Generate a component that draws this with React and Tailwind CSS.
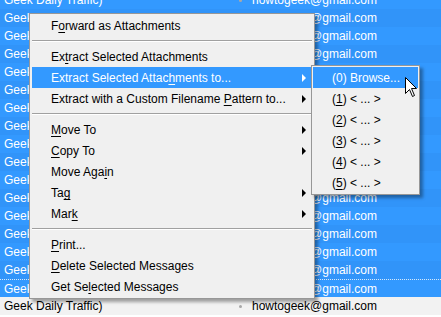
import React from "react";

const mainItems = [
  { label: "F&orward as Attachments" },
  { sep: true },
  { label: "Ex&tract Selected Attachments" },
  { label: "Extract Selected Attac&hments to...", sub: true, active: true },
  { label: "Extract with a Custom Filename &Pattern to...", sub: true },
  { sep: true },
  { label: "&Move To", sub: true },
  { label: "&Copy To", sub: true },
  { label: "Move Aga&in" },
  { label: "Ta&g", sub: true },
  { label: "Mar&k", sub: true },
  { sep: true },
  { label: "&Print..." },
  { label: "&Delete Selected Messages" },
  { label: "Get Se&lected Messages" },
];

const subItems = [
  { label: "(0) Browse...", active: true },
  { label: "(&1) < ... >" },
  { label: "(&2) < ... >" },
  { label: "(&3) < ... >" },
  { label: "(&4) < ... >" },
  { label: "(&5) < ... >" },
];

function Label({ text }) {
  const i = text.indexOf("&");
  if (i < 0) return <span className="whitespace-pre">{text}</span>;
  return (
    <span className="whitespace-pre">
      {text.slice(0, i)}
      <span className="underline underline-offset-[2px]">{text[i + 1]}</span>
      {text.slice(i + 2)}
    </span>
  );
}

function Separator() {
  return (
    <div className="h-[10px] py-[4px]">
      <div className="h-px bg-[#a0a0a0]" />
      <div className="h-px bg-white" />
    </div>
  );
}

function MenuItem({ item }) {
  return (
    <div
      className={
        "h-[21px] flex items-center justify-between pl-[19px] pr-[6px] pt-[1px] " +
        (item.active ? "bg-[#3399ff] text-white" : "text-black")
      }
    >
      <Label text={item.label} />
      {item.sub && (
        <div
          className={
            "w-0 h-0 border-y-[4px] border-y-transparent border-l-[4px] " +
            (item.active ? "border-l-white" : "border-l-black")
          }
        />
      )}
    </div>
  );
}

function Row({ index, selected, focus }) {
  let bg = index % 2 === 0 ? "bg-[#3399ff]" : "bg-[#3194f9]";
  if (!selected) bg = index % 2 === 0 ? "bg-white" : "bg-[#f2f2f2]";
  return (
    <div
      className={
        "h-[18px] flex items-center " +
        bg +
        (selected ? " text-white" : " text-black") +
        (focus ? " border-t border-dotted border-[#d8e8f8]" : "")
      }
    >
      <div className="w-[236px] pl-[4px] whitespace-nowrap">Geek Daily Traffic)</div>
      <div className="w-[16px] flex justify-start">
        <div className="ml-[3px] w-[3px] h-[3px] rounded-full bg-[#a8a8a8]" />
      </div>
      <div className="whitespace-nowrap">howtogeek@gmail.com</div>
    </div>
  );
}

export default function App() {
  const rows = Array.from({ length: 19 }, (_, i) => i);
  return (
    <div className="relative w-[441px] h-[317px] overflow-hidden bg-white font-['Liberation_Sans',Arial,sans-serif] text-[12px] leading-none">
      <div className="-mt-[9px]">
        {rows.map((i) => (
          <Row key={i} index={i} selected={i < 17} focus={i === 16} />
        ))}
      </div>

      <div className="absolute left-[29px] top-[13px] w-[286px] border border-[#979797] bg-[#f0f0f0] py-[1px] px-[2px] shadow-[3px_3px_3px_rgba(0,0,0,0.35)]">
        {mainItems.map((item, i) =>
          item.sep ? <Separator key={i} /> : <MenuItem key={i} item={item} />
        )}
      </div>

      <div className="absolute left-[311px] top-[65px] w-[109px] border border-[#979797] bg-[#f0f0f0] p-[1px] shadow-[3px_3px_3px_rgba(0,0,0,0.35)]">
        {subItems.map((item, i) => (
          <MenuItem key={i} item={item} />
        ))}
      </div>

      <svg
        className="absolute left-[405px] top-[77px]"
        width="13"
        height="21"
        viewBox="0 0 13 21"
      >
        <path
          d="M0.5 0.5 L0.5 16.5 L4.5 12.5 L7.5 19.5 L9.5 18.5 L6.5 11.5 L11.5 11.5 Z"
          fill="white"
          stroke="black"
          strokeWidth="1"
          strokeLinejoin="miter"
        />
      </svg>
    </div>
  );
}
